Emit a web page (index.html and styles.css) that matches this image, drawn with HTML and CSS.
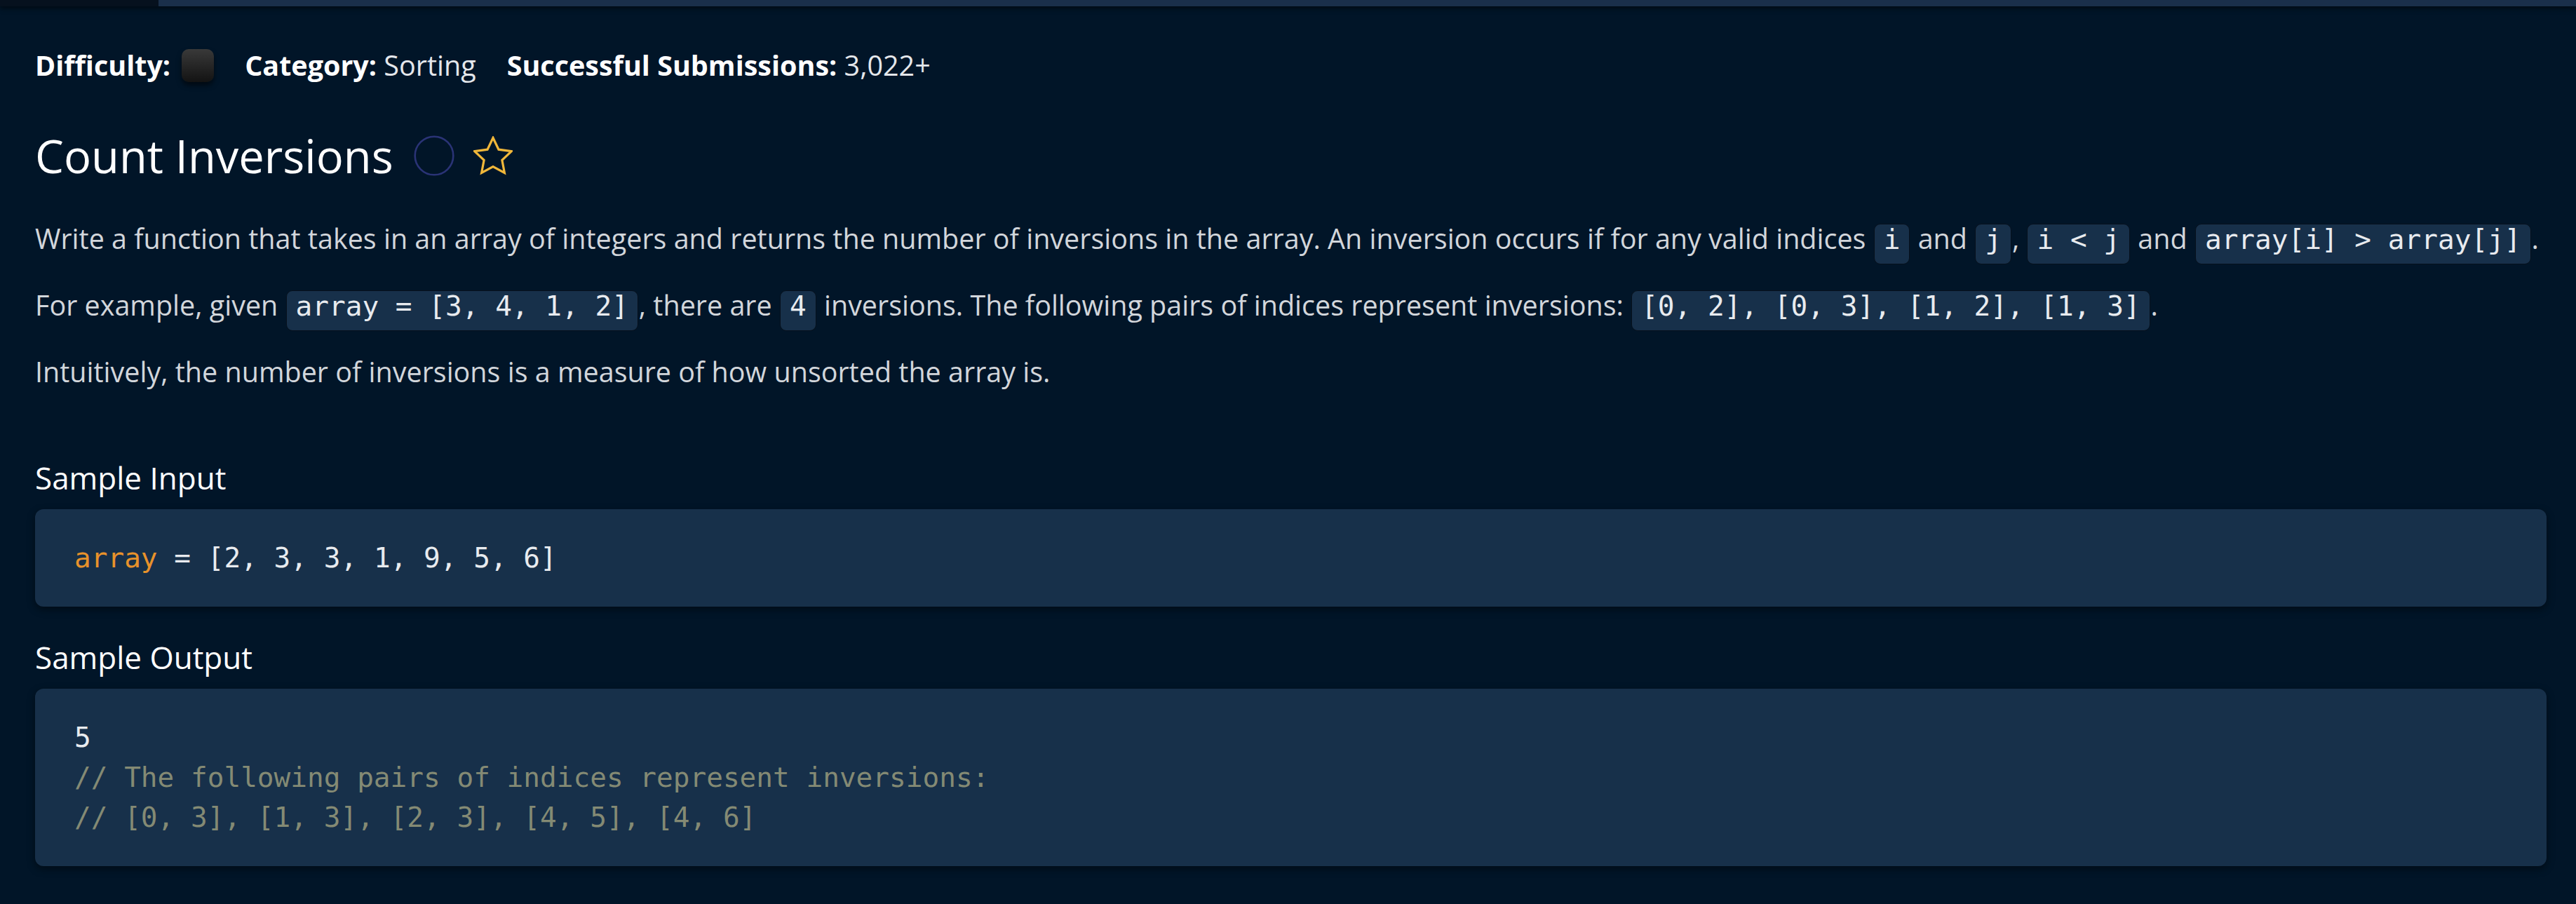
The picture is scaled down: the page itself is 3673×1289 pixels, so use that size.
FILE: index.html
```html
<!DOCTYPE html>
<html lang="en">
<head>
<meta charset="utf-8">
<title>Count Inversions</title>
<link rel="stylesheet" href="styles.css">
</head>
<body>
<div class="tabs">
  <div class="tab tab-active"></div>
  <div class="tab tab-rest"></div>
</div>
<main class="prompt">
  <div class="meta">
    <span class="meta-item"><b>Difficulty:</b><span class="difficulty"></span></span>
    <span class="meta-item"><b>Category:</b> Sorting</span>
    <span class="meta-item"><b>Successful Submissions:</b> 3,022+</span>
  </div>
  <h1 class="title">
    <span>Count Inversions</span>
    <svg class="icon-circle" width="58" height="58" viewBox="0 0 58 58" aria-hidden="true">
      <circle cx="29" cy="29" r="27.3" fill="none" stroke="#2a3376" stroke-width="2.6"/>
    </svg>
    <svg class="icon-star" width="56" height="56" viewBox="2 1.9 20 19.6" aria-hidden="true">
      <path d="M12 2.6l2.85 5.95 6.55.85-4.8 4.55 1.25 6.5L12 17.3l-5.85 3.15 1.25-6.5-4.8-4.55 6.55-.85z" fill="none" stroke="#f0b73a" stroke-width="1.15" stroke-linejoin="miter"/>
    </svg>
  </h1>
  <p class="text">Write a function that takes in an array of integers and returns the number of inversions in the array. An inversion occurs if for any valid indices <code class="pill">i</code> and <code class="pill">j</code>, <code class="pill">i &lt; j</code> and <code class="pill">array[i] &gt; array[j]</code>.</p>
  <p class="text">For example, given <code class="pill">array = [3, 4, 1, 2]</code>, there are <code class="pill">4</code> inversions. The following pairs of indices represent inversions: <code class="pill">[0, 2], [0, 3], [1, 2], [1, 3]</code>.</p>
  <p class="text">Intuitively, the number of inversions is a measure of how unsorted the array is.</p>
  <div class="samples">
    <section class="sample">
      <h2 class="sample-title">Sample Input</h2>
      <pre class="code"><span class="tok-var">array</span> = [2, 3, 3, 1, 9, 5, 6]</pre>
    </section>
    <section class="sample">
      <h2 class="sample-title">Sample Output</h2>
      <pre class="code">5
<span class="tok-comment">// The following pairs of indices represent inversions:</span>
<span class="tok-comment">// [0, 3], [1, 3], [2, 3], [4, 5], [4, 6]</span></pre>
    </section>
  </div>
</main>
</body>
</html>
```
FILE: styles.css
```css
html, body {
  margin: 0;
  padding: 0;
  background: #011528;
}

body {
  min-height: 100vh;
  font-family: "Open Sans", "Noto Sans", "Liberation Sans", sans-serif;
  color: #d2d6db;
}

.tabs {
  display: flex;
  height: 9px;
  box-shadow: 0 3px 7px rgba(0, 0, 0, 0.55);
  position: relative;
}

.tab-active {
  width: 226px;
  background: #06111e;
}

.tab-rest {
  flex: 1;
  background: #1a2f4a;
}

.prompt {
  padding: 56px 42px 50px 50px;
}

.meta {
  display: flex;
  align-items: center;
  gap: 44px;
  height: 56px;
  line-height: 56px;
  font-size: 39.5px;
  color: #e4e7eb;
}

.meta-item {
  display: flex;
  align-items: center;
  white-space: pre;
}

.meta-item b {
  font-weight: 700;
  color: #ffffff;
}

.difficulty {
  display: block;
  width: 46px;
  height: 47px;
  margin-left: 16px;
  border-radius: 10px;
  background: linear-gradient(#393939, #131313);
  box-shadow: 0 5px 7px rgba(0, 0, 0, 0.55);
}

.title {
  display: flex;
  align-items: center;
  gap: 29px;
  margin: 59px 0 0;
  font-size: 65px;
  line-height: 84px;
  font-weight: 400;
  color: #ffffff;
}

.icon-star {
  margin-left: -2px;
}

.text {
  margin: 0 0 39px;
  font-size: 39.5px;
  line-height: 56px;
  white-space: nowrap;
  color: #d2d6db;
}

.title + .text {
  margin-top: 48px;
}

.pill {
  display: inline-block;
  margin: 0 1px -9px;
  padding: 2px 13px 15px;
  border: 1px solid #06101c;
  border-radius: 9px;
  background: #17304a;
  font-family: "DejaVu Sans Mono", "Liberation Mono", monospace;
  font-size: 39.4px;
  line-height: 39px;
  color: #e8ebef;
}

.samples {
  margin-top: 95px;
}

.sample + .sample {
  margin-top: 44px;
}

.sample-title {
  margin: 0 0 17px;
  font-size: 44px;
  line-height: 56px;
  font-weight: 500;
  color: #ffffff;
}

.code {
  margin: 0;
  padding: 41px 56px;
  border-radius: 12px;
  background: #17304a;
  box-shadow: 0 4px 12px rgba(0, 0, 0, 0.45);
  font-family: "DejaVu Sans Mono", "Liberation Mono", monospace;
  font-size: 39.4px;
  line-height: 57px;
  color: #e8ebef;
}

.tok-var {
  color: #e8922b;
}

.tok-comment {
  color: #848a74;
}
```
